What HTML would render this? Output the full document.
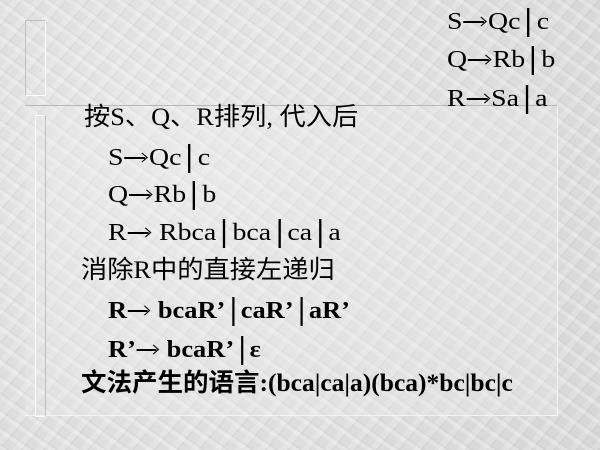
<!DOCTYPE html>
<html><head><meta charset="utf-8"><style>
body{margin:0;width:600px;height:450px;overflow:hidden;position:relative;
background:#dedede;
background-image:
repeating-linear-gradient(35deg,rgba(255,255,255,.25) 0 4px,rgba(170,170,170,.10) 4px 6px,rgba(255,255,255,0) 6px 14px),
repeating-linear-gradient(-50deg,rgba(160,160,160,.08) 0 2px,rgba(255,255,255,.18) 2px 8px,rgba(0,0,0,0) 8px 17px),
radial-gradient(circle at 30% 40%,#e8e8e8,#d6d6d6);
font-family:"Liberation Serif","Noto Serif CJK SC",serif;color:#000}
.t{position:absolute;white-space:nowrap;font-size:24px;line-height:1;transform-origin:0 0}
.f{transform:scaleX(1.16)}
.fb{transform:scaleX(1.1)}
.c{transform:scaleX(1.05)}
.cj{font-family:"Liberation Serif","Noto Sans CJK SC",sans-serif}
.b{font-weight:bold}
.a{display:inline-block;width:22px;height:24px;vertical-align:-4px;position:relative}
.a:before{content:"";position:absolute;left:1px;right:3px;top:12px;height:1.5px;background:#000}
.a:after{content:"";position:absolute;right:2px;top:9px;width:6px;height:6px;border-top:1.5px solid #000;border-right:1.5px solid #000;transform:rotate(45deg)}
.v{display:inline-block;width:2px;height:29px;background:#000;margin:0 6px;vertical-align:-8px}
.box{position:absolute;left:25px;top:105px;width:532px;height:309px;border-top:1px solid #b8b8b8;border-right:1px solid #f4f4f4;border-bottom:1px solid #f4f4f4;background:rgba(235,235,235,.3)}
.r1{position:absolute;left:25px;top:20px;width:19px;height:74px;border:1px solid #c0c0c0;border-right-color:#fff;border-bottom-color:#fff}
.r2{position:absolute;left:35px;top:115px;width:9px;height:300px;border:1px solid #fff;border-right-color:#c0c0c0}
</style></head><body>
<div class="r1"></div><div class="box"></div><div class="r2"></div>
<div class="t f" style="left:447px;top:8px">S<i class="a"></i>Qc<i class="v"></i>c</div>
<div class="t f" style="left:447px;top:46px">Q<i class="a"></i>Rb<i class="v"></i>b</div>
<div class="t f" style="left:447px;top:85px">R<i class="a"></i>Sa<i class="v"></i>a</div>
<div class="t cj c" style="left:84px;top:105px;font-size:25px">按S、Q、R排列, 代入后</div>
<div class="t f" style="left:108px;top:144px">S<i class="a"></i>Qc<i class="v"></i>c</div>
<div class="t f" style="left:108px;top:181px">Q<i class="a"></i>Rb<i class="v"></i>b</div>
<div class="t f" style="left:108px;top:219px">R<i class="a"></i> Rbca<i class="v"></i>bca<i class="v"></i>ca<i class="v"></i>a</div>
<div class="t cj c" style="left:81px;top:258px;font-size:25px">消除R中的直接左递归</div>
<div class="t b fb" style="left:108px;top:297px">R<i class="a"></i> bcaR’<i class="v"></i>caR’<i class="v"></i>aR’</div>
<div class="t b fb" style="left:108px;top:336px">R’<i class="a"></i> bcaR’<i class="v"></i>ε</div>
<div class="t b" style="left:81px;top:371px;font-size:25px;transform:scaleX(1.02)"><span class="cj">文法产生的语言</span>:(bca|ca|a)(bca)*bc|bc|c</div>
</body></html>
